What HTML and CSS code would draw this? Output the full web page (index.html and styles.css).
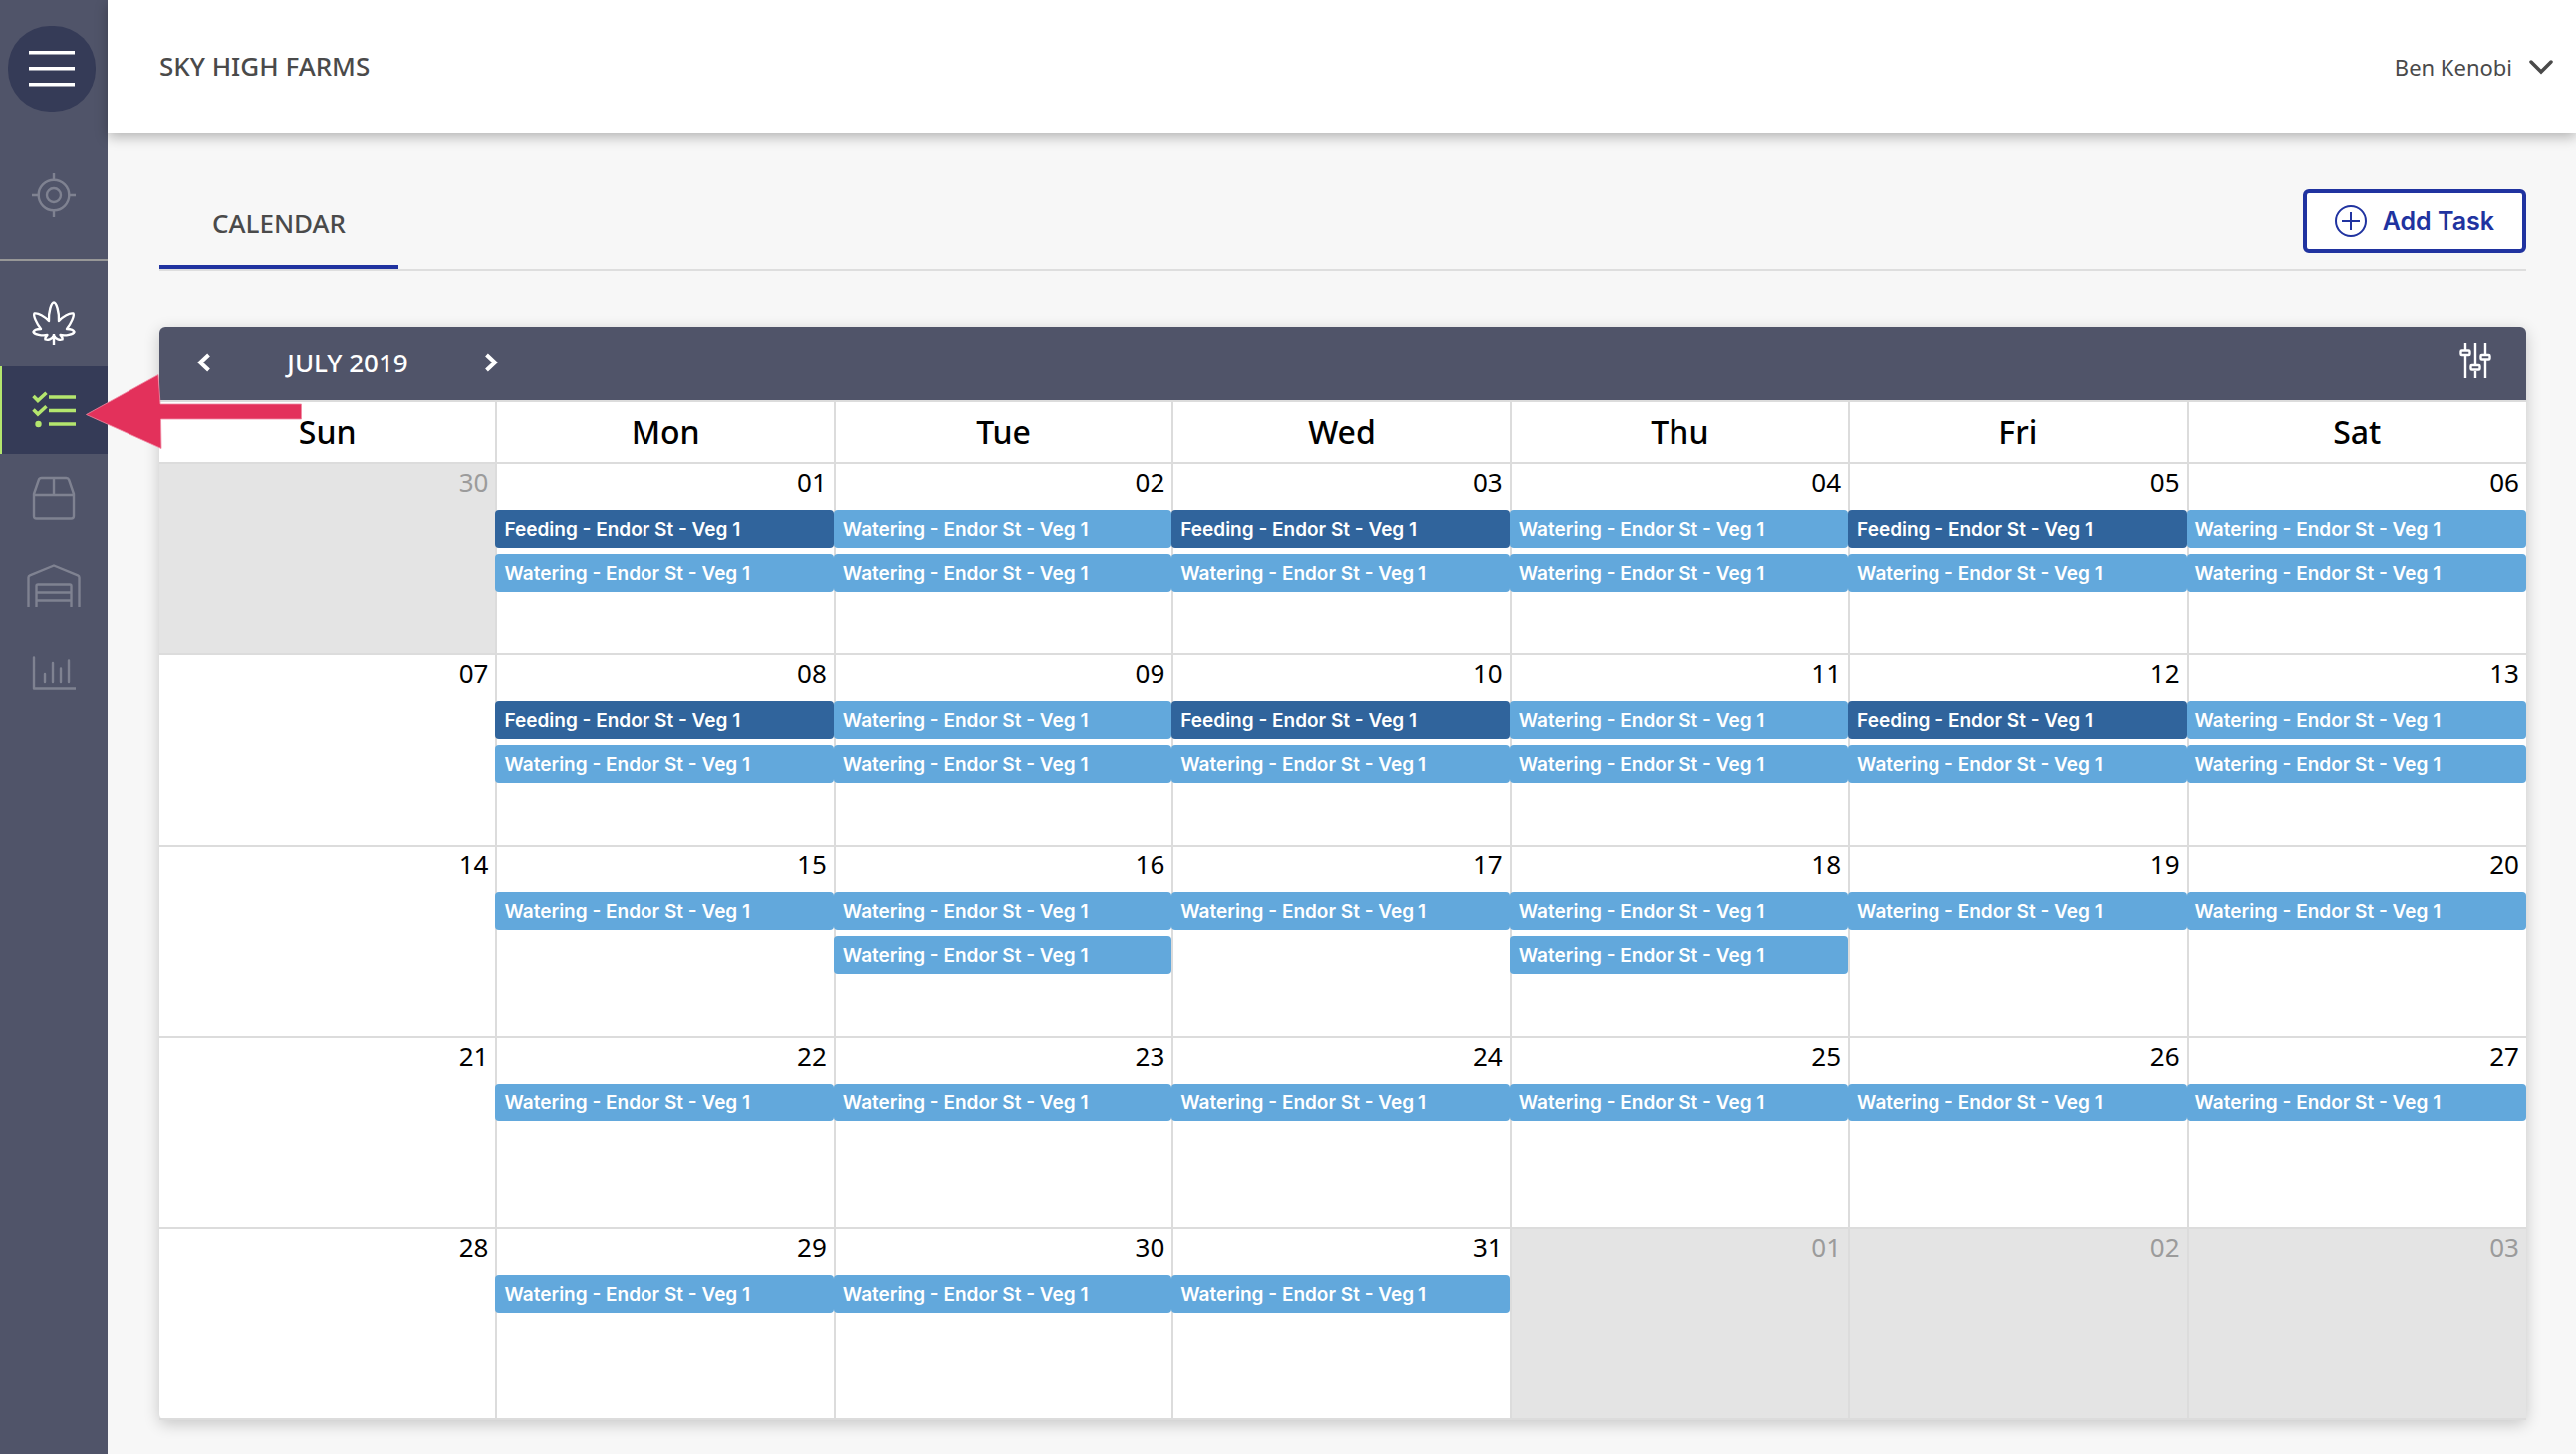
FILE: index.html
```html
<!DOCTYPE html>
<html lang="en">
<head>
  <meta charset="UTF-8">
  <title>Sky High Farms - Calendar</title>
  <link rel="stylesheet" href="styles.css">
</head>
<body>
  <div class="app">
    <aside class="sidebar">
      <button class="menu-button" type="button" aria-label="Menu">
        <svg width="46" height="36" viewBox="0 0 46 36"><path d="M0 1.8H46M0 17.8H46M0 33.8H46" stroke="#fff" stroke-width="3.6"/></svg>
      </button>
      <nav class="nav">
        <a class="nav-item" href="#" aria-label="Locations">
          <svg width="44" height="44" viewBox="0 0 44 44"><circle cx="22" cy="22" r="15.3"/><circle cx="22" cy="22" r="7"/><path d="M22 0.5V6.5M22 37.5V43.5M0.5 22H6.5M37.5 22H43.5"/></svg>
        </a>
        <hr class="nav-divider">
        <a class="nav-item nav-item-light" href="#" aria-label="Plants">
          <svg width="44" height="44" viewBox="0 0 44 44"><path d="M22 34.500C20 38.500 16 39.500 13.500 38.500C12.800 36.500 14 35.500 15.500 34C10 35.200 2.500 33.500 1.500 31C2.200 29 5.500 28 9 28C5 23 1 14.500 2.500 12.500C6 11.500 13 15.500 17 20C16.500 11 19.500 1.500 22 1.500C24.500 1.500 27.500 11 27 20C31 15.500 38 11.500 41.500 12.500C43 14.500 39 23 35 28C38.500 28 41.800 29 42.500 31C41.500 33.500 34 35.200 28.500 34C30 35.500 31.200 36.500 30.500 38.500C28 39.500 24 38.500 22 34.500ZM22 33V44"/></svg>
        </a>
        <a class="nav-item nav-item-active" href="#" aria-label="Tasks">
          <svg width="44" height="44" viewBox="0 0 44 44"><path d="M17 9H44M17 22.500H44M17 36H44M1.500 8L6 12.500L14.500 4.800M1.500 21.500L6 26L14.500 18.300" stroke-width="3.500"/><circle class="dot" cx="6.500" cy="36" r="3.200"/></svg>
        </a>
        <a class="nav-item" href="#" aria-label="Packages">
          <svg width="44" height="44" viewBox="0 0 44 44"><path d="M2 18L6.800 4Q7.500 2 9.500 2H34.500Q36.500 2 37.200 4L42 18V40Q42 42.500 39.500 42.500H4.500Q2 42.500 2 40ZM2 19H42M22 2V19"/></svg>
        </a>
        <a class="nav-item" href="#" aria-label="Facilities">
          <svg width="56" height="44" viewBox="0 0 56 44"><path d="M2.500 43.500V13.500Q2.500 12 4 11.400L28 1.500L52 11.400Q53.500 12 53.500 13.500V43.500M10.500 43.500V22Q10.500 20.500 12 20.500H44Q45.500 20.500 45.500 22V43.500M10.500 28.500H45.500M10.500 36.500H45.500"/></svg>
        </a>
        <a class="nav-item" href="#" aria-label="Reports">
          <svg width="44" height="44" viewBox="0 0 44 44"><path d="M2 6.500V37.500H43.500M13 23V31M21 12V31M29 17.500V31M37 9.500V31"/></svg>
        </a>
      </nav>
    </aside>

    <div class="page">
      <header class="header">
        <h1 class="company">SKY HIGH FARMS</h1>
        <button class="user" type="button">
          Ben Kenobi
          <svg width="26" height="16" viewBox="0 0 26 16"><path d="M3 3L13 13L23 3" fill="none" stroke="#4a4a4a" stroke-width="3.500" stroke-linecap="round"/></svg>
        </button>
      </header>

      <main class="content">
        <div class="toolbar">
          <a class="tab" href="#">CALENDAR</a>
          <button class="add-task" type="button">
            <svg width="32" height="32" viewBox="0 0 32 32"><g fill="none" stroke="#2033a0" stroke-width="2"><circle cx="16" cy="16" r="15"/><path d="M16 7V25M7 16H25"/></g></svg>
            Add Task
          </button>
        </div>

        <section class="calendar">
          <div class="calendar-bar">
            <button class="month-button" type="button" aria-label="Previous month">
              <svg width="14" height="20" viewBox="0 0 14 20"><path d="M11.500 2L3 10L11.500 18" fill="none" stroke="#fff" stroke-width="4"/></svg>
            </button>
            <h2 class="month">JULY 2019</h2>
            <button class="month-button" type="button" aria-label="Next month">
              <svg width="14" height="20" viewBox="0 0 14 20"><path d="M2.500 2L11 10L2.500 18" fill="none" stroke="#fff" stroke-width="4"/></svg>
            </button>
            <button class="filter-button" type="button" aria-label="Filter">
              <svg width="34" height="38" viewBox="0 0 34 38"><g fill="none" stroke="#fff" stroke-width="2.400"><path d="M7 1V8M7 14V37M17 1V24M17 30V37M27 1V12M27 18V37"/><rect x="2.500" y="8.500" width="9" height="4.500" rx="1"/><rect x="12.500" y="24" width="9" height="4.500" rx="1"/><rect x="22.500" y="13" width="9" height="4.500" rx="1"/></g></svg>
            </button>
          </div>

          <table class="month-table">
            <thead>
              <tr><th>Sun</th><th>Mon</th><th>Tue</th><th>Wed</th><th>Thu</th><th>Fri</th><th>Sat</th></tr>
            </thead>
            <tbody>
              <tr>
                <td class="outside"><div class="day">30</div></td>
                <td><div class="day">01</div><a class="task feeding" href="#">Feeding - Endor St - Veg 1</a><a class="task" href="#">Watering - Endor St - Veg 1</a></td>
                <td><div class="day">02</div><a class="task" href="#">Watering - Endor St - Veg 1</a><a class="task" href="#">Watering - Endor St - Veg 1</a></td>
                <td><div class="day">03</div><a class="task feeding" href="#">Feeding - Endor St - Veg 1</a><a class="task" href="#">Watering - Endor St - Veg 1</a></td>
                <td><div class="day">04</div><a class="task" href="#">Watering - Endor St - Veg 1</a><a class="task" href="#">Watering - Endor St - Veg 1</a></td>
                <td><div class="day">05</div><a class="task feeding" href="#">Feeding - Endor St - Veg 1</a><a class="task" href="#">Watering - Endor St - Veg 1</a></td>
                <td><div class="day">06</div><a class="task" href="#">Watering - Endor St - Veg 1</a><a class="task" href="#">Watering - Endor St - Veg 1</a></td>
              </tr>
              <tr>
                <td><div class="day">07</div></td>
                <td><div class="day">08</div><a class="task feeding" href="#">Feeding - Endor St - Veg 1</a><a class="task" href="#">Watering - Endor St - Veg 1</a></td>
                <td><div class="day">09</div><a class="task" href="#">Watering - Endor St - Veg 1</a><a class="task" href="#">Watering - Endor St - Veg 1</a></td>
                <td><div class="day">10</div><a class="task feeding" href="#">Feeding - Endor St - Veg 1</a><a class="task" href="#">Watering - Endor St - Veg 1</a></td>
                <td><div class="day">11</div><a class="task" href="#">Watering - Endor St - Veg 1</a><a class="task" href="#">Watering - Endor St - Veg 1</a></td>
                <td><div class="day">12</div><a class="task feeding" href="#">Feeding - Endor St - Veg 1</a><a class="task" href="#">Watering - Endor St - Veg 1</a></td>
                <td><div class="day">13</div><a class="task" href="#">Watering - Endor St - Veg 1</a><a class="task" href="#">Watering - Endor St - Veg 1</a></td>
              </tr>
              <tr>
                <td><div class="day">14</div></td>
                <td><div class="day">15</div><a class="task" href="#">Watering - Endor St - Veg 1</a></td>
                <td><div class="day">16</div><a class="task" href="#">Watering - Endor St - Veg 1</a><a class="task" href="#">Watering - Endor St - Veg 1</a></td>
                <td><div class="day">17</div><a class="task" href="#">Watering - Endor St - Veg 1</a></td>
                <td><div class="day">18</div><a class="task" href="#">Watering - Endor St - Veg 1</a><a class="task" href="#">Watering - Endor St - Veg 1</a></td>
                <td><div class="day">19</div><a class="task" href="#">Watering - Endor St - Veg 1</a></td>
                <td><div class="day">20</div><a class="task" href="#">Watering - Endor St - Veg 1</a></td>
              </tr>
              <tr>
                <td><div class="day">21</div></td>
                <td><div class="day">22</div><a class="task" href="#">Watering - Endor St - Veg 1</a></td>
                <td><div class="day">23</div><a class="task" href="#">Watering - Endor St - Veg 1</a></td>
                <td><div class="day">24</div><a class="task" href="#">Watering - Endor St - Veg 1</a></td>
                <td><div class="day">25</div><a class="task" href="#">Watering - Endor St - Veg 1</a></td>
                <td><div class="day">26</div><a class="task" href="#">Watering - Endor St - Veg 1</a></td>
                <td><div class="day">27</div><a class="task" href="#">Watering - Endor St - Veg 1</a></td>
              </tr>
              <tr>
                <td><div class="day">28</div></td>
                <td><div class="day">29</div><a class="task" href="#">Watering - Endor St - Veg 1</a></td>
                <td><div class="day">30</div><a class="task" href="#">Watering - Endor St - Veg 1</a></td>
                <td><div class="day">31</div><a class="task" href="#">Watering - Endor St - Veg 1</a></td>
                <td class="outside"><div class="day">01</div></td>
                <td class="outside"><div class="day">02</div></td>
                <td class="outside"><div class="day">03</div></td>
              </tr>
            </tbody>
          </table>
        </section>
      </main>
    </div>
  </div>

  <!-- Arrow pointing at the tasks item -->
  <svg class="pointer" width="220" height="78" viewBox="0 0 220 78"><path d="M2.500 42.500L75 2.500L77 32H218.500V47H77.500L78 76.500Z" fill="#e3315b" stroke="#f08aa3" stroke-width="0.800"/></svg>
</body>
</html>
```

FILE: styles.css
```css
* {
  box-sizing: border-box;
  margin: 0;
  padding: 0;
}

body {
  position: relative;
  font-family: "Noto Sans", "Open Sans", sans-serif;
  font-size: 26px;
  line-height: 36px;
  color: #4a4a4a;
  background-color: #f7f7f7;
}

button {
  font: inherit;
  color: inherit;
  background: none;
  border: none;
  cursor: pointer;
}

a {
  color: inherit;
  text-decoration: none;
}

svg {
  display: block;
}

.app {
  display: flex;
  min-height: 100vh;
}

/* Sidebar */
.sidebar {
  flex: none;
  width: 108px;
  padding-top: 26px;
  background-color: #505469;
}

.menu-button {
  display: flex;
  align-items: center;
  justify-content: center;
  width: 88px;
  height: 86px;
  margin: 0 0 40px 8px;
  border-radius: 42px;
  background-color: #353b57;
}

.nav-item {
  display: flex;
  align-items: center;
  justify-content: center;
  height: 88px;
  fill: none;
  stroke: #7f8291;
  stroke-width: 2.4;
  stroke-linecap: round;
  stroke-linejoin: round;
}

.nav-item-light {
  stroke: #fff;
  stroke-linecap: butt;
}

.nav-item-active {
  background-color: #353b57;
  box-shadow: inset 2px 0 #b4e66e;
  stroke: #b4e66e;
  stroke-linecap: butt;
  stroke-linejoin: miter;
}

.nav-item-active .dot {
  fill: #b4e66e;
  stroke: none;
}

.nav-divider {
  height: 2px;
  margin: 20px 0 18px;
  border: none;
  background-color: #979797;
}

/* Header */
.page {
  flex: 1;
  min-width: 0;
}

.header {
  position: relative;
  display: flex;
  align-items: center;
  justify-content: space-between;
  height: 134px;
  padding: 0 22px 0 52px;
  background-color: #fff;
  box-shadow: 0 4px 12px rgba(0, 0, 0, 0.28);
}

.company {
  padding-bottom: 2px;
  font-size: 26px;
  font-weight: 500;
}

.user {
  display: flex;
  align-items: center;
  gap: 16px;
  font-size: 22px;
}

/* Toolbar */
.content {
  padding: 56px 50px 34px 52px;
}

.toolbar {
  display: flex;
  align-items: flex-start;
  justify-content: space-between;
  margin-bottom: 56px;
  border-bottom: 2px solid #dedede;
}

.tab {
  width: 240px;
  padding: 16px 0 24px;
  border-bottom: 4px solid #2033a0;
  font-weight: 500;
  text-align: center;
}

.add-task {
  display: flex;
  align-items: center;
  gap: 16px;
  height: 64px;
  padding: 0 28px;
  border: 4px solid #2033a0;
  border-radius: 6px;
  font-family: Inter, sans-serif;
  font-size: 25px;
  font-weight: 600;
  color: #2033a0;
  background-color: #fff;
}

/* Calendar */
.calendar {
  border-radius: 6px;
  background-color: #fff;
  box-shadow: 0 4px 16px rgba(0, 0, 0, 0.2);
}

.calendar-bar {
  display: flex;
  align-items: center;
  height: 74px;
  padding: 0 34px 2px 0;
  border-radius: 6px 6px 0 0;
  color: #fff;
  background-color: #505469;
}

.month-button {
  display: flex;
  align-items: center;
  justify-content: center;
  width: 90px;
  height: 72px;
}

.month {
  width: 198px;
  font-size: 26px;
  font-weight: 500;
  text-align: center;
}

.filter-button {
  margin: 0 0 4px auto;
}

.month-table {
  width: 100%;
  table-layout: fixed;
  border-spacing: 0;
  border-top: 2px solid #dcdcdc;
  color: #000;
}

.month-table th {
  height: 62px;
  border-right: 2px solid #dcdcdc;
  border-bottom: 2px solid #dcdcdc;
  font-size: 32px;
  font-weight: 500;
}

.month-table td {
  height: 192px;
  border-right: 2px solid #dcdcdc;
  border-bottom: 2px solid #dcdcdc;
  vertical-align: top;
}

.month-table th:last-child,
.month-table td:last-child {
  /* no right line, so a little narrower than the others */
  width: calc((100% - 12px) / 7);
  border-right: none;
}

.month-table .outside {
  color: #9b9b9b;
  background-color: #e4e4e4;
}

.day {
  margin-bottom: 10px;
  padding-right: 7px;
  text-align: right;
}

/* Tasks run over the line on their left */
.task {
  position: relative;
  display: block;
  margin: 0 0 6px -2px;
  padding: 2px 9px 0;
  border-radius: 4px;
  font-family: Inter, sans-serif;
  font-size: 19px;
  font-weight: 600;
  line-height: 36px;
  white-space: nowrap;
  color: #fff;
  background-color: #62a8dc;
}

.feeding {
  background-color: #30649c;
}

.pointer {
  position: absolute;
  top: 374px;
  left: 84px;
}
```
